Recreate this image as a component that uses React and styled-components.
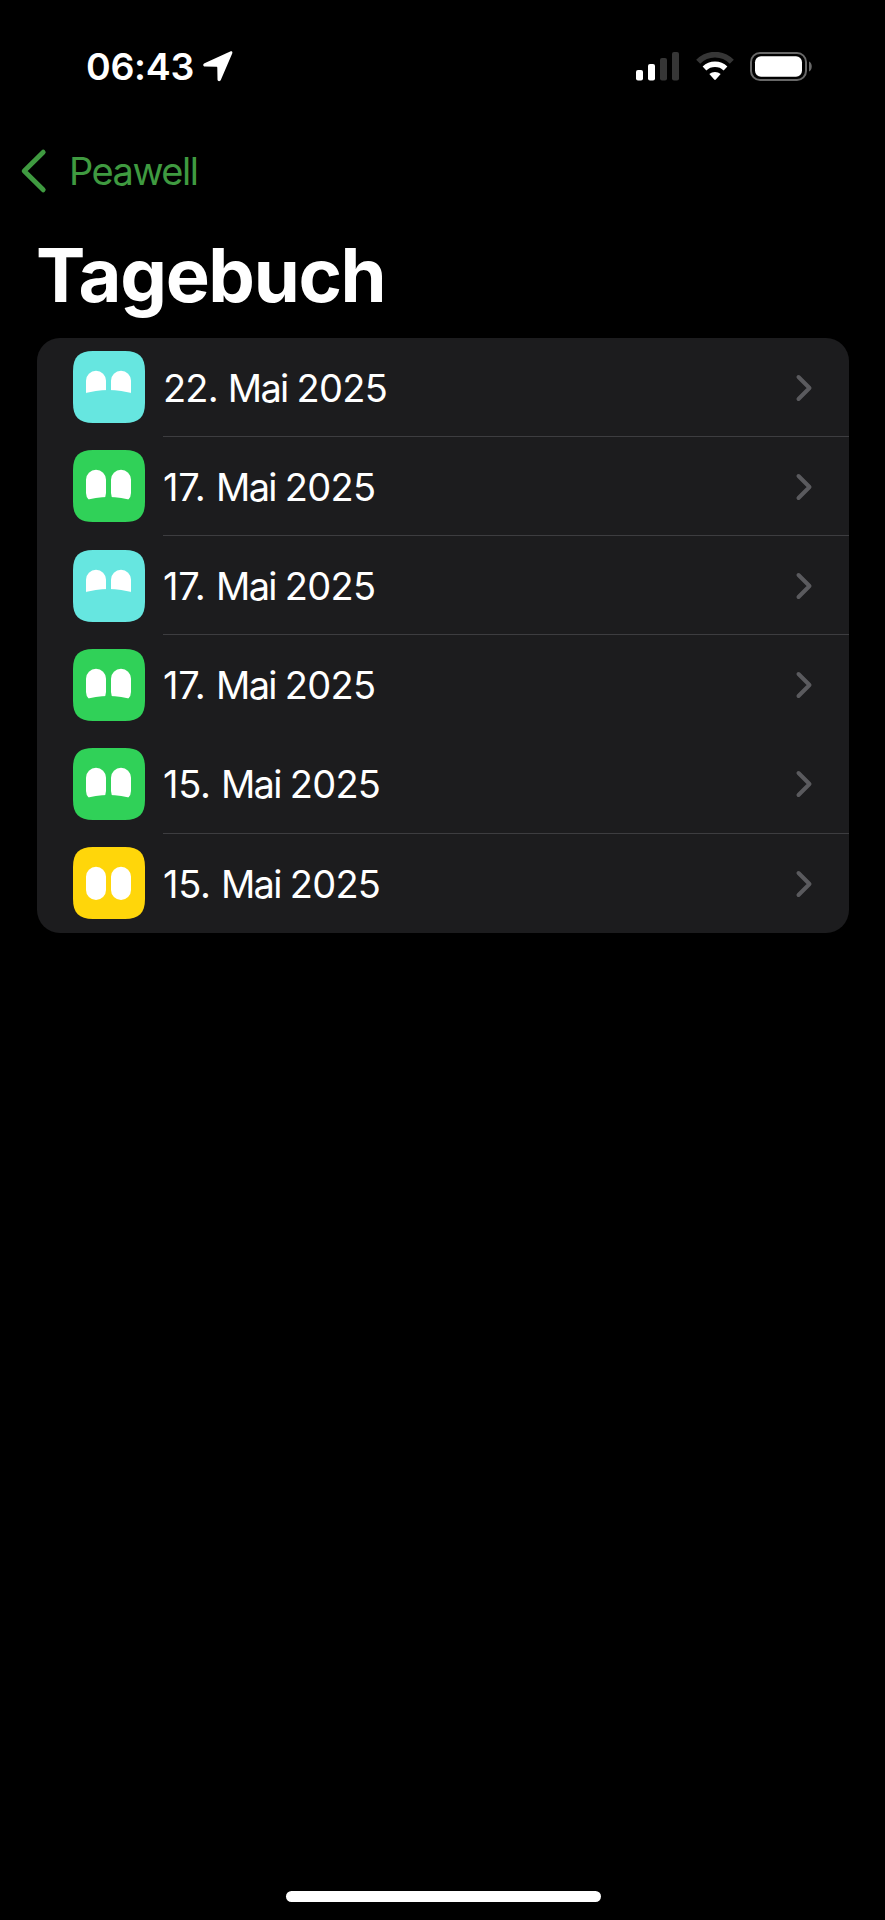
import React from "react";
import styled, { createGlobalStyle } from "styled-components";

const GlobalStyle = createGlobalStyle`
  *, *::before, *::after { box-sizing: border-box; }
  html, body { margin: 0; background: #000; }
  body { font-family: Inter, "Liberation Sans", sans-serif; color: #fff; }
  svg { display: block; flex: none; }
`;

const Screen = styled.main`
  width: 885px;
  height: 1920px;
  display: flex;
  flex-direction: column;
  background: #000;
  overflow: hidden;
`;

const StatusBar = styled.header`
  height: 133px;
  padding: 0 72px 0 86px;
  display: flex;
  align-items: center;
  justify-content: space-between;
`;

const StatusGroup = styled.div`
  display: flex;
  align-items: center;
`;

const Clock = styled.time`
  width: 117px;
  font-size: 37.5px;
  line-height: 44px;
  font-weight: 600;
  letter-spacing: -0.3px;
  white-space: nowrap;
`;

const NavBar = styled.nav`
  height: 77px;
  padding: 0 0 1px 19px;
  display: flex;
  align-items: center;
`;

const BackButton = styled.button`
  padding: 0;
  border: 0;
  background: none;
  display: flex;
  align-items: center;
  gap: 20px;
  color: #3f9a40;
  font: 400 38px/46px Inter, sans-serif;
  letter-spacing: -1.5px;
`;

const Title = styled.h1`
  margin: 0;
  height: 128px;
  padding: 20px 0 0 36px;
  font-size: 74px;
  line-height: 90px;
  font-weight: 700;
  letter-spacing: -1.35px;
`;

const EntryList = styled.ul`
  margin: 0 36px 0 37px;
  padding: 0;
  list-style: none;
  background: #1c1c1e;
  border-radius: 23px;
  overflow: hidden;
`;

const Entry = styled.li`
  height: 99.15px;
  padding-left: 36px;
  display: flex;
  align-items: center;
  gap: 18px;
`;

const EntryBody = styled.div`
  flex: 1;
  align-self: stretch;
  padding: 1.6px 36px 0 0;
  display: flex;
  align-items: center;
  justify-content: space-between;
  border-bottom: 1px solid ${(p) => (p.$divided ? "#3d3d40" : "transparent")};
`;

const EntryDate = styled.span`
  font-size: 38px;
  line-height: 46px;
  letter-spacing: -0.75px;
  white-space: pre;
`;

const DatePart = styled.span`
  letter-spacing: ${(p) => p.$tracking}px;
`;

const Tile = styled.svg`
  margin-bottom: 0.6px;
`;

const HomeArea = styled.footer`
  margin-top: auto;
  padding: 0 0 18px 1px;
  display: flex;
  justify-content: center;
`;

const HomeIndicator = styled.div`
  width: 315px;
  height: 11px;
  border-radius: 6px;
  background: #fff;
`;

const moods = {
  mint: { color: "#66e6e0", cut: "M10 43 Q35.5 35 61 43 V56 H10 Z" },
  green: { color: "#30d158", cut: "M10 51 Q35.5 43 61 51 V58 H10 Z" },
  yellow: { color: "#ffd60a", cut: null },
};

function MoodTile({ mood }) {
  const { color, cut } = moods[mood];
  return (
    <Tile width="72" height="72" viewBox="0 0 72 72">
      <path
        fill={color}
        d="M0 20 C0 6 6 0 20 0 H52 C66 0 72 6 72 20 V52 C72 66 66 72 52 72 H20 C6 72 0 66 0 52 Z"
      />
      <rect x="13" y="19.7" width="20" height="33.3" rx="10" fill="#fff" />
      <rect x="38" y="19.7" width="20" height="33.3" rx="10" fill="#fff" />
      {cut && <path d={cut} fill={color} />}
    </Tile>
  );
}

function Chevron() {
  return (
    <svg width="18" height="28" viewBox="0 0 18 28" fill="none">
      <path d="M3.5 3 L14.5 14 L3.5 25" stroke="#5a5a5e" strokeWidth="4" strokeLinecap="round" strokeLinejoin="round" />
    </svg>
  );
}

function BackChevron() {
  return (
    <svg width="30" height="46" viewBox="0 0 30 46" fill="none">
      <path d="M24.2 4.2 L5.2 23 L24.2 41.8" stroke="currentColor" strokeWidth="4.9" strokeLinecap="round" strokeLinejoin="round" />
    </svg>
  );
}

function LocationArrow() {
  return (
    <svg width="30" height="31" viewBox="0 0 30 31">
      <path
        fill="#fff"
        d="M27.2 .5 C28.8 -.2 29.8 .7 29.2 2.5 L17.8 29 C17.1 30.7 14.6 30.5 14.5 28.5 L14.3 16.9 C14.3 16.1 14 15.8 13.2 15.8 L2 15.6 C-.2 15.5 -.4 13.2 1.5 12.3 Z"
      />
    </svg>
  );
}

function Signal() {
  return (
    <svg width="43" height="29" viewBox="0 0 43 29">
      <rect x="0" y="18" width="7" height="10.4" rx="2" fill="#fff" />
      <rect x="12" y="12" width="7" height="16.4" rx="2" fill="#fff" />
      <rect x="24" y="6" width="7" height="22.4" rx="2" fill="#363636" />
      <rect x="36" y="0" width="7" height="28.4" rx="2" fill="#363636" />
    </svg>
  );
}

function Wifi() {
  return (
    <svg width="38" height="29" viewBox="0 0 38 29" fill="none">
      <path d="M2.2 9.8 C11.4 .2 26.6 .2 35.8 9.8" stroke="#363636" strokeWidth="5.6" />
      <path d="M8.5 16.5 C14.3 10.9 23.7 10.9 29.5 16.5" stroke="#fff" strokeWidth="5.4" />
      <path d="M13.3 21.9 C16.5 19.2 21.5 19.2 24.7 21.9 L20 27.3 Q19 28.5 18 27.3 Z" fill="#fff" />
    </svg>
  );
}

function Battery() {
  return (
    <svg width="63" height="29" viewBox="0 0 63 29">
      <rect x="1" y="1" width="55" height="27" rx="9" fill="none" stroke="#686868" strokeWidth="2" />
      <rect x="5" y="4.2" width="47" height="20.6" rx="6" fill="#fff" />
      <path d="M59 9.5 C62.7 11 62.7 18 59 19.5 Z" fill="#686868" />
    </svg>
  );
}

const StatusIcons = styled(StatusGroup)`
  gap: 16.5px;
`;

const entries = [
  { day: "22.", mood: "mint", divided: true, tracking: -0.8 },
  { day: "17.", mood: "green", divided: true, tracking: -0.2 },
  { day: "17.", mood: "mint", divided: true, tracking: -0.2 },
  { day: "17.", mood: "green", divided: false, tracking: -0.2 },
  { day: "15.", mood: "green", divided: true, tracking: -0.3 },
  { day: "15.", mood: "yellow", divided: false, tracking: -0.3 },
];

export default function App() {
  return (
    <Screen>
      <GlobalStyle />
      <StatusBar>
        <StatusGroup>
          <Clock>06:43</Clock>
          <LocationArrow />
        </StatusGroup>
        <StatusIcons>
          <Signal />
          <Wifi />
          <Battery />
        </StatusIcons>
      </StatusBar>
      <NavBar>
        <BackButton>
          <BackChevron />
          Peawell
        </BackButton>
      </NavBar>
      <Title>Tagebuch</Title>
      <EntryList>
        {entries.map((entry, i) => (
          <Entry key={i}>
            <MoodTile mood={entry.mood} />
            <EntryBody $divided={entry.divided}>
              <EntryDate>
                <DatePart $tracking={entry.tracking}>{entry.day} </DatePart>
                <DatePart $tracking={-1.7}>{"Mai "}</DatePart>
                2025
              </EntryDate>
              <Chevron />
            </EntryBody>
          </Entry>
        ))}
      </EntryList>
      <HomeArea>
        <HomeIndicator />
      </HomeArea>
    </Screen>
  );
}
